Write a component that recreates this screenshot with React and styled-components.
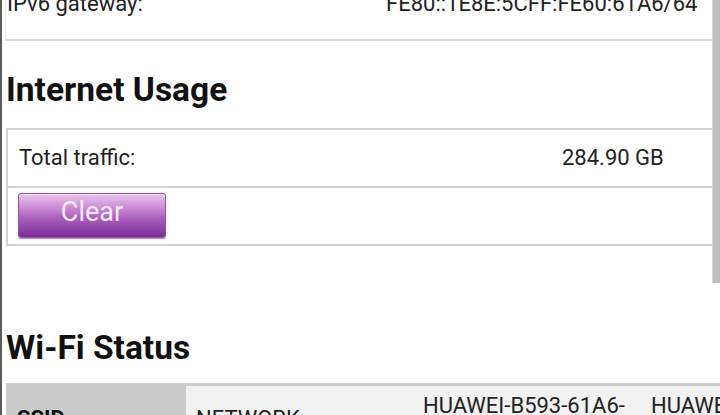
import React from 'react';
import styled, { createGlobalStyle } from 'styled-components';

const GlobalStyle = createGlobalStyle`
  html, body {
    margin: 0;
    padding: 0;
    background: #ffffff;
    overflow: hidden;
  }
  body {
    font-family: Roboto, "Liberation Sans", Arial, sans-serif;
    color: #222222;
  }
`;

const Screen = styled.div`
  position: relative;
  width: 720px;
  height: 415px;
  overflow: hidden;
  box-sizing: border-box;
  border-left: 2px solid #5c5c5c;
  background: #ffffff;
`;

const Content = styled.div`
  display: flex;
  flex-direction: column;
  padding-left: 4px;
`;

const ScrollThumb = styled.div`
  position: absolute;
  top: 0;
  right: 0;
  width: 7px;
  height: 283px;
  background: #bfbfbf;
  border-left: 1px solid #d6d6d6;
`;

const InfoTable = styled.div`
  margin-top: -24px;
  margin-left: -1px;
  margin-right: 4px;
  border-left: 1px solid #ececec;
  border-bottom: 2px solid #dcdcdc;
`;

const InfoRow = styled.div`
  display: flex;
  padding: 15px 0 22px 1px;
  font-size: 22px;
  line-height: 26px;
`;

const Heading = styled.h2`
  margin: ${p => p.$top}px 0 ${p => p.$bottom}px 0;
  font-size: 33.5px;
  line-height: 37px;
  font-weight: 700;
  color: #111111;
`;

const UsageTable = styled.div`
  margin-right: 4px;
  border: 2px solid #d2d2d2;
  border-right: none;
`;

const UsageRow = styled.div`
  display: flex;
  align-items: center;
  padding: ${p => (p.$button ? '5px 0 6px 10px' : '15px 0 15px 11px')};
  font-size: 22px;
  line-height: 26px;
  & + & {
    border-top: 2px solid #d2d2d2;
  }
`;

const Label = styled.span`
  flex: 0 0 ${p => p.$width}px;
`;

const Value = styled.span`
  white-space: nowrap;
`;

const ClearButton = styled.button`
  width: 148px;
  height: 45px;
  box-sizing: border-box;
  border: 1px solid #9656a8;
  border-radius: 3px;
  background: linear-gradient(
    to bottom,
    #ebc6ee 0%,
    #cf92d8 28%,
    #a95cba 58%,
    #7a2c99 100%
  );
  box-shadow: 0 1px 1px rgba(90, 30, 110, 0.5), inset 0 1px 0 rgba(255, 255, 255, 0.5);
  color: #f6e9f6;
  font-family: Roboto, "Liberation Sans", Arial, sans-serif;
  font-size: 27px;
  line-height: 30px;
  padding: 0 0 7px 0;
  cursor: pointer;
`;

const WifiTable = styled.table`
  border-collapse: collapse;
  table-layout: fixed;
  width: 1100px;
  border-top: 3px solid #cccccc;
  font-size: 22px;
  line-height: 26px;
`;

const HeadCell = styled.th`
  width: 180px;
  box-sizing: border-box;
  padding: 7px 11px;
  background: #cbcbcb;
  text-align: left;
  font-weight: 700;
  color: #111111;
  vertical-align: middle;
`;

const DataCell = styled.td`
  width: ${p => p.$width}px;
  box-sizing: border-box;
  padding: 7px 10px;
  background: #f1f1f1;
  vertical-align: middle;
`;

export default function App() {
  return (
    <>
      <GlobalStyle />
      <Screen>
        <Content>
          <InfoTable>
            <InfoRow>
              <Label $width={379}>IPv6 gateway:</Label>
              <Value>FE80::1E8E:5CFF:FE60:61A6/64</Value>
            </InfoRow>
          </InfoTable>

          <Heading $top={30} $bottom={20}>Internet Usage</Heading>
          <UsageTable>
            <UsageRow>
              <Label $width={543}>Total traffic:</Label>
              <Value>284.90 GB</Value>
            </UsageRow>
            <UsageRow $button>
              <ClearButton>Clear</ClearButton>
            </UsageRow>
          </UsageTable>

          <Heading $top={83} $bottom={17}>Wi-Fi Status</Heading>
          <WifiTable>
            <tbody>
              <tr>
                <HeadCell>SSID</HeadCell>
                <DataCell $width={227}>NETWORK</DataCell>
                <DataCell $width={228}>HUAWEI-B593-61A6-<br />2.4G</DataCell>
                <DataCell $width={228}>HUAWEI-B593-61A6-<br />5G</DataCell>
                <DataCell $width={237}></DataCell>
              </tr>
            </tbody>
          </WifiTable>
        </Content>
        <ScrollThumb />
      </Screen>
    </>
  );
}
